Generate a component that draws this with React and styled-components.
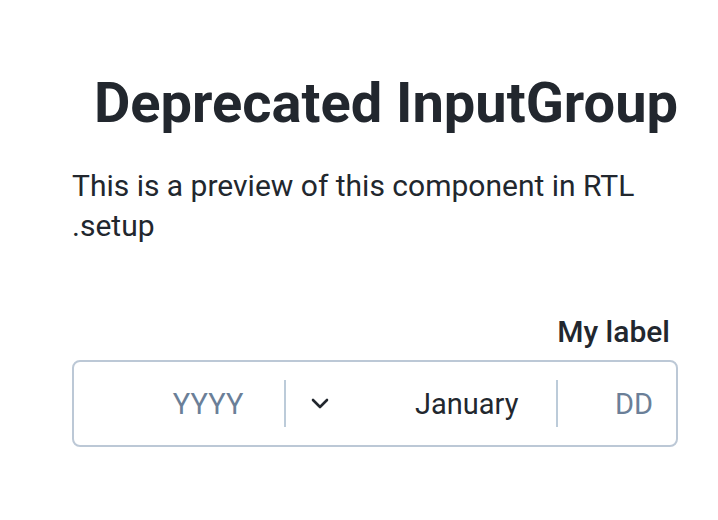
import React from 'react'
import styled, { createGlobalStyle } from 'styled-components'

const GlobalStyle = createGlobalStyle`
  html, body {
    margin: 0;
    padding: 0;
    background: #fff;
  }
  body {
    font-family: Roboto, "Liberation Sans", sans-serif;
    color: #22272e;
  }
`

const Page = styled.div`
  direction: rtl;
  padding: 70px 40px 0 72px;
`

const Title = styled.h1`
  margin: 0;
  font-size: 56px;
  font-weight: 700;
  line-height: 66px;
  color: #22272e;
`

const Intro = styled.p`
  margin: 30px 0 0;
  font-size: 30px;
  line-height: 40px;
  text-align: left;
`

const Field = styled.div`
  margin-top: 68px;
  display: flex;
  flex-direction: column;
  gap: 10px;
`

const Label = styled.label`
  font-size: 30px;
  font-weight: 500;
  line-height: 36px;
  padding-right: 8px;
`

const Group = styled.div`
  display: flex;
  align-items: center;
  height: 83px;
  border: 2px solid #bcc8d6;
  border-radius: 8px;
`

const Segment = styled.div`
  display: flex;
  align-items: center;
  justify-content: space-between;
  width: ${p => p.$w}px;
  padding-right: ${p => p.$pad}px;
  padding-left: ${p => p.$padLeft || 0}px;
  box-sizing: border-box;
  font-size: 29px;
  color: ${p => (p.$placeholder ? '#6b7f98' : '#22272e')};
`

const Divider = styled.span`
  width: 2px;
  height: 47px;
  background: #bccbd9;
`

const Chevron = () => (
  <svg width="18" height="12" viewBox="0 0 18 12" fill="none">
    <path d="M2 2l7 7 7-7" stroke="#22272e" strokeWidth="2.6" strokeLinecap="round" strokeLinejoin="round" />
  </svg>
)

export default function App() {
  return (
    <Page>
      <GlobalStyle />
      <Title>Deprecated InputGroup</Title>
      <Intro>This is a preview of this component in RTL setup.</Intro>
      <Field>
        <Label>My label</Label>
        <Group>
          <Segment $w={118} $pad={23} $placeholder>DD</Segment>
          <Divider />
          <Segment $w={271} $pad={38} $padLeft={25}>
            <span>January</span>
            <Chevron />
          </Segment>
          <Divider />
          <Segment $w={211} $pad={41} $placeholder>YYYY</Segment>
        </Group>
      </Field>
    </Page>
  )
}
